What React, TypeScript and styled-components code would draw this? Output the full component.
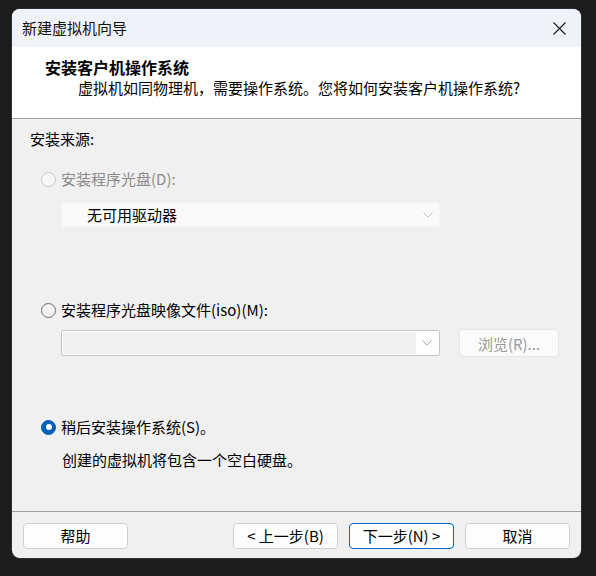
import React from "react";
import styled, { createGlobalStyle } from "styled-components";

const Global = createGlobalStyle`
  html, body { margin: 0; padding: 0; background: #1c1c1c; }
  body {
    font-family: "Noto Sans", "Noto Sans CJK SC", sans-serif;
    font-size: 15px;
    color: #000;
  }
`;

const Screen = styled.div`
  width: 596px;
  height: 576px;
  padding: 9px 0 0 12px;
  box-sizing: border-box;
  background: #1c1c1c;
`;

const Window = styled.div`
  width: 569px;
  height: 549px;
  border-radius: 8px;
  overflow: hidden;
  display: flex;
  flex-direction: column;
  background: #f0f0f0;
  box-shadow: 0 0 0 1px #2e2e2e;
`;

const TitleBar = styled.div`
  height: 38px;
  flex: none;
  background: #eff2f9;
  display: flex;
  align-items: center;
  justify-content: space-between;
  padding: 0 15px 0 10px;
`;

const TitleText = styled.span`
  font-family: "Noto Sans CJK SC", sans-serif;
  font-size: 15px;
  line-height: 20px;
  color: #111;
`;

const CloseBtn = styled.div`
  width: 14px;
  height: 14px;
  display: flex;
  align-items: center;
  justify-content: center;
`;

const Header = styled.div`
  height: 72px;
  flex: none;
  background: #fff;
  box-sizing: border-box;
  padding: 10px 0 0 33px;
  border-bottom: 1px solid #a0a0a0;
`;

const HeaderTitle = styled.div`
  font-family: "Noto Sans CJK SC", sans-serif;
  font-weight: 700;
  font-size: 16px;
  line-height: 20px;
  margin-bottom: 1px;
`;

const HeaderSub = styled.div`
  font-family: "Noto Sans CJK SC", sans-serif;
  font-size: 15px;
  line-height: 20px;
  padding-left: 33px;
`;

const Body = styled.div`
  flex: 1;
  display: flex;
  flex-direction: column;
  padding: 10px 0 0 18px;
  border-bottom: 1px solid #a0a0a0;
`;

const Line = styled.div<{ $mt?: number; $ml?: number; $muted?: boolean }>`
  font-family: "Noto Sans CJK SC", sans-serif;
  font-size: 15px;
  line-height: 20px;
  margin-top: ${(p) => p.$mt ?? 0}px;
  margin-left: ${(p) => p.$ml ?? 0}px;
  color: ${(p) => (p.$muted ? "#8a8a8a" : "#000")};
`;

const RadioRow = styled.div<{ $mt: number; $disabled?: boolean }>`
  display: flex;
  align-items: center;
  gap: 5px;
  margin-top: ${(p) => p.$mt}px;
  margin-left: 11px;
  height: 20px;
  font-family: "Noto Sans CJK SC", sans-serif;
  font-size: 15px;
  line-height: 20px;
  color: ${(p) => (p.$disabled ? "#8a8a8a" : "#000")};
`;

const RadioCircle = styled.span<{ $state: "disabled" | "off" | "on" }>`
  width: 15px;
  height: 15px;
  box-sizing: border-box;
  border-radius: 50%;
  flex: none;
  display: flex;
  align-items: center;
  justify-content: center;
  border: 1px solid
    ${(p) =>
      p.$state === "disabled" ? "#c9c9c9" : p.$state === "on" ? "#005fb8" : "#6a6a6a"};
  background: ${(p) =>
    p.$state === "on" ? "#005fb8" : p.$state === "disabled" ? "#f7f7f7" : "#f4f4f4"};
`;

const RadioDot = styled.span`
  width: 6px;
  height: 6px;
  border-radius: 50%;
  background: #fff;
`;

const ComboRow = styled.div<{ $mt: number }>`
  display: flex;
  align-items: center;
  gap: 19px;
  margin-top: ${(p) => p.$mt}px;
  margin-left: 31px;
`;

const Combo = styled.div<{ $variant: "disabled" | "empty" }>`
  width: 379px;
  height: ${(p) => (p.$variant === "empty" ? 26 : 25)}px;
  box-sizing: border-box;
  display: flex;
  align-items: center;
  background: ${(p) => (p.$variant === "empty" ? "#fff" : "#fafafa")};
  border: 1px solid ${(p) => (p.$variant === "empty" ? "#c5c5c5" : "#f4f4f4")};
  border-radius: 2px;
  padding: ${(p) => (p.$variant === "empty" ? "1px" : "0")};
`;

const ComboText = styled.span`
  flex: 1;
  padding-left: 25px;
  font-family: "Noto Sans CJK SC", sans-serif;
  font-size: 15px;
  line-height: 20px;
  color: #000;
`;

const ComboField = styled.span`
  flex: 1;
  align-self: stretch;
  background: #f0f0f0;
`;

const Chevron = styled.span`
  width: 22px;
  flex: none;
  display: flex;
  align-items: center;
  justify-content: center;
`;

const BrowseBtn = styled.div`
  width: 100px;
  height: 28px;
  box-sizing: border-box;
  border: 1px solid #e6e6e6;
  border-radius: 4px;
  background: #fbfbfb;
  display: flex;
  align-items: center;
  justify-content: center;
  font-family: "Noto Sans CJK SC", sans-serif;
  font-size: 15px;
  color: #9a9a9a;
`;

const Footer = styled.div`
  height: 46px;
  flex: none;
  display: flex;
  align-items: flex-start;
  justify-content: space-between;
  padding: 11px 11px 0 11px;
  box-sizing: border-box;
`;

const BtnGroup = styled.div`
  display: flex;
  gap: 11px;
`;

const Button = styled.div<{ $primary?: boolean }>`
  width: 105px;
  height: 26px;
  box-sizing: border-box;
  border-radius: 4px;
  border: 1px solid ${(p) => (p.$primary ? "#0067c0" : "#d0d0d0")};
  background: #fdfdfd;
  display: flex;
  align-items: center;
  justify-content: center;
  font-family: "Noto Sans CJK SC", sans-serif;
  font-size: 15px;
  line-height: 20px;
  color: #000;
`;

const ChevronIcon = ({ color }: { color: string }) => (
  <svg width="10" height="6" viewBox="0 0 10 6">
    <polyline points="0.5,0.5 5,5 9.5,0.5" fill="none" stroke={color} strokeWidth="1" />
  </svg>
);

export default function App() {
  return (
    <>
      <Global />
      <Screen>
        <Window>
          <TitleBar>
            <TitleText>新建虚拟机向导</TitleText>
            <CloseBtn>
              <svg width="13" height="13" viewBox="0 0 13 13">
                <path d="M0.5 0.5 L12.5 12.5 M12.5 0.5 L0.5 12.5" stroke="#1a1a1a" strokeWidth="1.1" />
              </svg>
            </CloseBtn>
          </TitleBar>
          <Header>
            <HeaderTitle>安装客户机操作系统</HeaderTitle>
            <HeaderSub>虚拟机如同物理机，需要操作系统。您将如何安装客户机操作系统?</HeaderSub>
          </Header>
          <Body>
            <Line>安装来源:</Line>
            <RadioRow $mt={20} $disabled>
              <RadioCircle $state="disabled" />
              安装程序光盘(D):
            </RadioRow>
            <ComboRow $mt={13}>
              <Combo $variant="disabled">
                <ComboText>无可用驱动器</ComboText>
                <Chevron>
                  <ChevronIcon color="#c4c4c4" />
                </Chevron>
              </Combo>
            </ComboRow>
            <RadioRow $mt={73}>
              <RadioCircle $state="off" />
              安装程序光盘映像文件(iso)(M):
            </RadioRow>
            <ComboRow $mt={9}>
              <Combo $variant="empty">
                <ComboField />
                <Chevron>
                  <ChevronIcon color="#a8a8a8" />
                </Chevron>
              </Combo>
              <BrowseBtn>浏览(R)...</BrowseBtn>
            </ComboRow>
            <RadioRow $mt={60}>
              <RadioCircle $state="on">
                <RadioDot />
              </RadioCircle>
              稍后安装操作系统(S)。
            </RadioRow>
            <Line $mt={13} $ml={32}>创建的虚拟机将包含一个空白硬盘。</Line>
          </Body>
          <Footer>
            <Button>帮助</Button>
            <BtnGroup>
              <Button>&lt; 上一步(B)</Button>
              <Button $primary>下一步(N) &gt;</Button>
              <Button>取消</Button>
            </BtnGroup>
          </Footer>
        </Window>
      </Screen>
    </>
  );
}
